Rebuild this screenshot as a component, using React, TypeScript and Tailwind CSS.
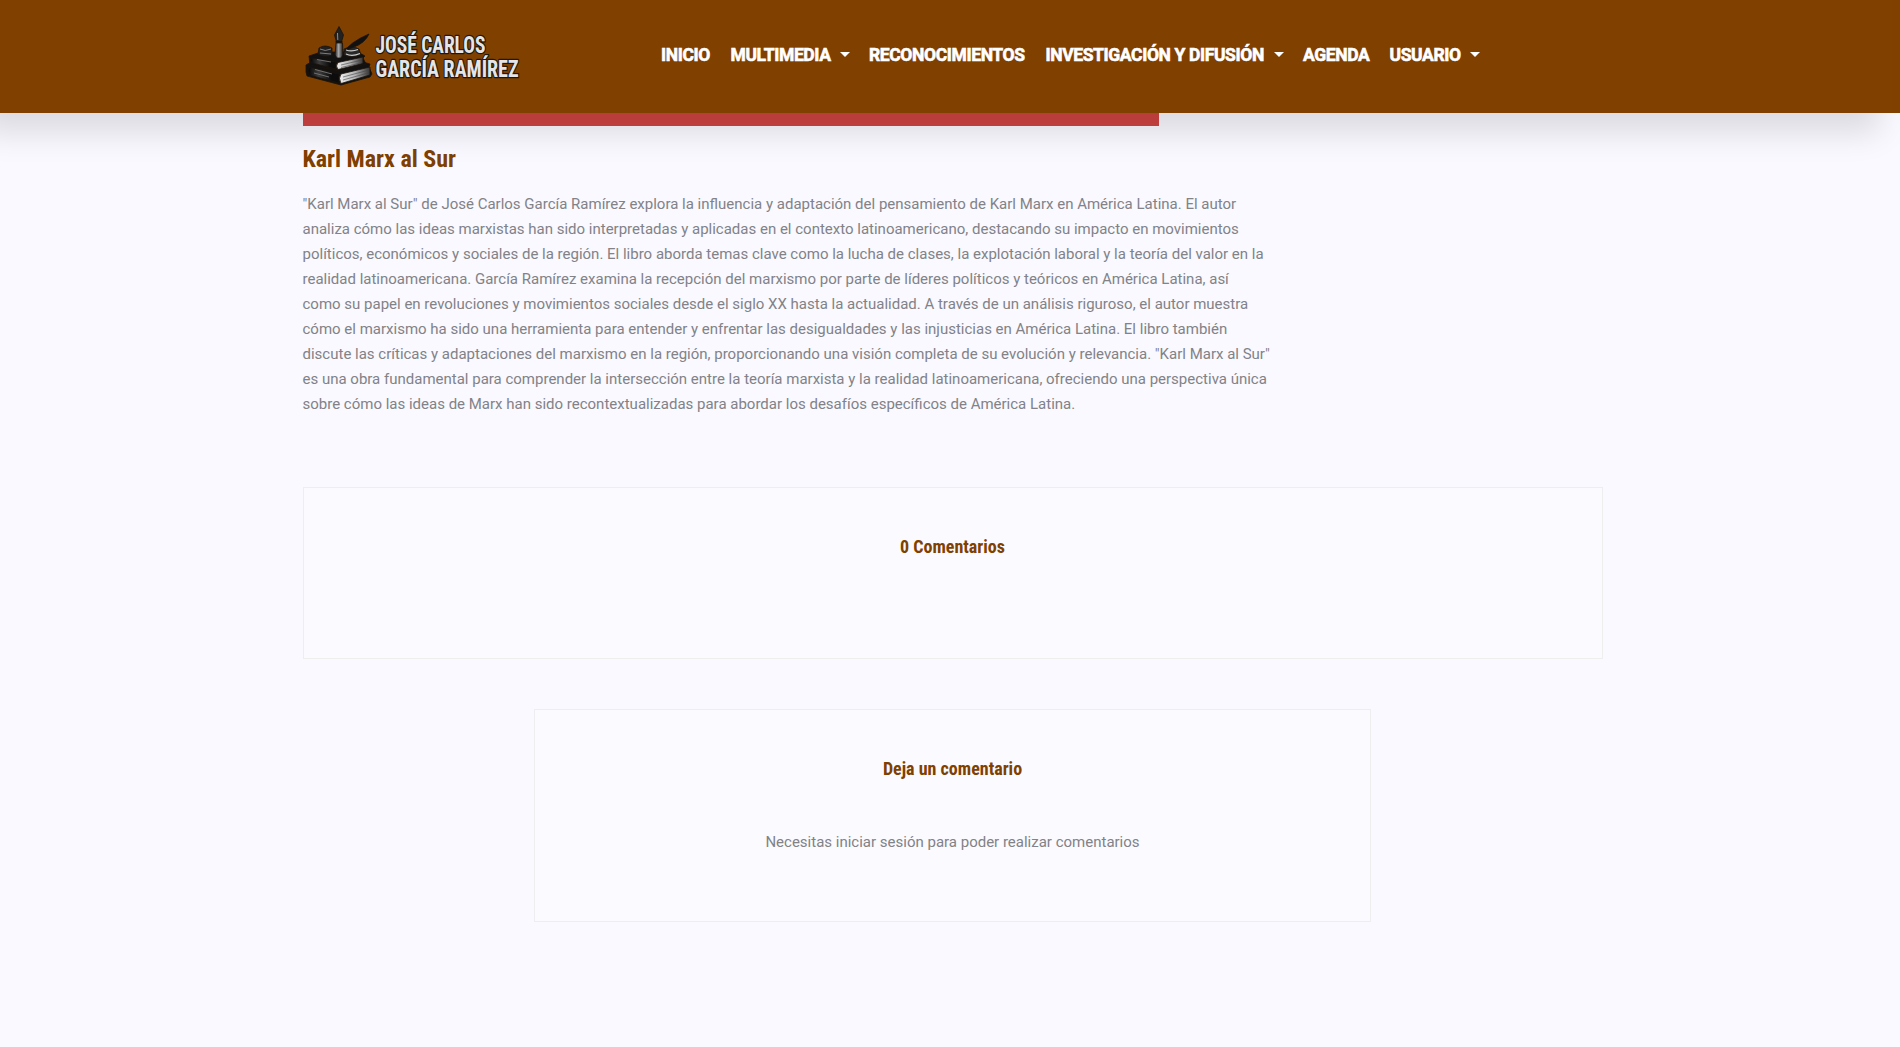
import React from 'react';

const nav = [
  { label: 'INICIO', width: 'w-[50px]' },
  { label: 'MULTIMEDIA', width: 'w-[101px]', caret: true },
  { label: 'RECONOCIMIENTOS', width: 'w-[157px]' },
  { label: 'INVESTIGACIÓN Y DIFUSIÓN', width: 'w-[220px]', caret: true },
  { label: 'AGENDA', width: 'w-[67px]' },
  { label: 'USUARIO', width: 'w-[72px]', caret: true },
];

const lines = [
  '"Karl Marx al Sur" de José Carlos García Ramírez explora la influencia y adaptación del pensamiento de Karl Marx en América Latina. El autor',
  'analiza cómo las ideas marxistas han sido interpretadas y aplicadas en el contexto latinoamericano, destacando su impacto en movimientos',
  'políticos, económicos y sociales de la región. El libro aborda temas clave como la lucha de clases, la explotación laboral y la teoría del valor en la',
  'realidad latinoamericana. García Ramírez examina la recepción del marxismo por parte de líderes políticos y teóricos en América Latina, así',
  'como su papel en revoluciones y movimientos sociales desde el siglo XX hasta la actualidad. A través de un análisis riguroso, el autor muestra',
  'cómo el marxismo ha sido una herramienta para entender y enfrentar las desigualdades y las injusticias en América Latina. El libro también',
  'discute las críticas y adaptaciones del marxismo en la región, proporcionando una visión completa de su evolución y relevancia. "Karl Marx al Sur"',
  'es una obra fundamental para comprender la intersección entre la teoría marxista y la realidad latinoamericana, ofreciendo una perspectiva única',
  'sobre cómo las ideas de Marx han sido recontextualizadas para abordar los desafíos específicos de América Latina.',
];

function Logo() {
  return (
    <svg className="block" width="220" height="64" viewBox="0 0 220 64" role="img" aria-label="José Carlos García Ramírez">
      <defs>
        <linearGradient id="pages" x1="0" x2="1">
          <stop offset="0" stopColor="#f0f0f0" />
          <stop offset="0.5" stopColor="#b4b4b4" />
          <stop offset="1" stopColor="#333" />
        </linearGradient>
        <linearGradient id="cover" x1="0" x2="1">
          <stop offset="0" stopColor="#050505" />
          <stop offset="0.35" stopColor="#3c3c3c" />
          <stop offset="0.75" stopColor="#0c0c0c" />
        </linearGradient>
        <linearGradient id="nib" x1="0" x2="1">
          <stop offset="0" stopColor="#222" />
          <stop offset="0.45" stopColor="#a8a8a8" />
          <stop offset="1" stopColor="#151515" />
        </linearGradient>
      </defs>
      <g stroke="#1c130b" strokeWidth="0.8" strokeLinejoin="round">
        <path d="M3 40 L8 37 L60 37 L67 39 L66 42 L69 49 L67 52 L38 60 L4 51 L3 47Z" fill="#111" />
        <path d="M6 42 L36 49 V58 L6 50 Q4 46 6 42Z" fill="url(#cover)" />
        <path d="M38 49 L67 42 L67 50 L38 58.500 Q35 53 38 49Z" fill="url(#pages)" />
        <path d="M6 31 L18 27 L55 27 L62 31 L60 33 L63 39 L36 46 L7 40Z" fill="#111" />
        <path d="M8 33 L33 37 V44 L9 38 Q6 35 8 33Z" fill="url(#cover)" />
        <path d="M35 37.500 L60 32 L60 38.500 L35 44.500 Q32 41 35 37.500Z" fill="url(#pages)" />
        <path d="M16 23 Q22 19 29 23 V30 Q22 33 15 29Z" fill="#202020" />
        <path d="M41 24 Q49 20 56 24 L58 30 Q48 34 41 30Z" fill="#292929" />
        <path d="M40 28 Q47 17 66 9 Q62 18 51 22 Q44 24 40 28Z" fill="#111" />
        <path d="M33 18 H39.500 L40 30 L38 33 H34 L32 30Z" fill="url(#nib)" />
        <path d="M36 1.500 L40.500 10 L38.500 17 H33.500 L31.500 10Z" fill="#222" />
        <path d="M32.500 17 H39.500" stroke="#111" strokeWidth="1.500" />
      </g>
      <g fill="none" strokeWidth="0.9">
        <path d="M34.500 8 L34.800 15" stroke="#999" />
        <path d="M17 24 Q22 27 28 24 M17 28 L28 29" stroke="#888" />
        <path d="M43 25 Q49 27 55 24.500 M43 29 Q49 32 57 28.500" stroke="#ccc" strokeWidth="1.200" />
        <path d="M14 34.500 L28 37 M12 44.500 L29 49 M11 48 L26 52" stroke="#777" />
        <path d="M38 40 L59 35 M38 42.500 L58 38 M40 52 L66 45 M40 55 L65 48" stroke="#444" strokeWidth="0.6" />
      </g>
      <g className="[font-stretch:75%]" fontFamily="Roboto, 'Liberation Sans', sans-serif" fontWeight="700" fontSize="23" fill="#e5e5e8" stroke="#21180f" strokeWidth="2.500" paintOrder="stroke" strokeLinejoin="round">
        <text x="72.500" y="28" textLength="110" lengthAdjust="spacingAndGlyphs">JOSÉ CARLOS</text>
        <text x="72.500" y="52" textLength="143" lengthAdjust="spacingAndGlyphs">GARCÍA RAMÍREZ</text>
      </g>
    </svg>
  );
}

export default function App() {
  return (
    <div className="flex min-h-[1047px] flex-col overflow-hidden bg-[#f9f9ff] font-[Roboto,sans-serif] text-[15px] leading-[25px] text-[#828287]">
      <header className="relative z-10 flex h-[113px] w-full shrink-0 bg-[#804000] pl-[303px] shadow-[-20px_20px_30px_rgba(0,0,0,0.12)]">
        <div className="mt-[25px] w-[358px]"><Logo /></div>
        <nav className="mt-[43px] flex h-[25px] gap-[19.5px] text-[17.5px] font-bold text-white">
          {nav.map((item) => (
            <a key={item.label} className="flex whitespace-nowrap">
              <span className={`${item.width} tracking-[-0.38px] [-webkit-text-stroke:0.6px_white]`}>{item.label}</span>
              {item.caret && <i className="ml-2 mt-[9px] h-0 w-0 border-x-[5px] border-t-[5px] border-x-transparent border-t-white" />}
            </a>
          ))}
        </nav>
      </header>
      <main className="ml-[302.5px] w-[1300px]">
        <div className="h-[13px] w-[856px] bg-[#d04442]" />
        <h1 className="mt-[18px] h-[30px] text-2xl leading-[30px] font-bold text-[#804000] [font-stretch:75%]">Karl Marx al Sur</h1>
        <p className="mt-[18px] whitespace-nowrap">
          {lines.map((line) => <span key={line} className="block">{line}</span>)}
        </p>
        <section className="mt-[70px] h-[172px] border border-[#eeeeee] bg-[#fafaff] pt-[47px] text-center">
          <h2 className="text-lg leading-6 font-bold text-[#804000] [font-stretch:75%]">0 Comentarios</h2>
        </section>
        <section className="mt-[50px] ml-[231.5px] h-[213px] w-[837px] border border-[#eeeeee] bg-[#fafaff] pt-[47px] text-center">
          <h2 className="text-lg leading-6 font-bold text-[#804000] [font-stretch:75%]">Deja un comentario</h2>
          <p className="mt-[49px]">Necesitas iniciar sesión para poder realizar comentarios</p>
        </section>
      </main>
    </div>
  );
}
